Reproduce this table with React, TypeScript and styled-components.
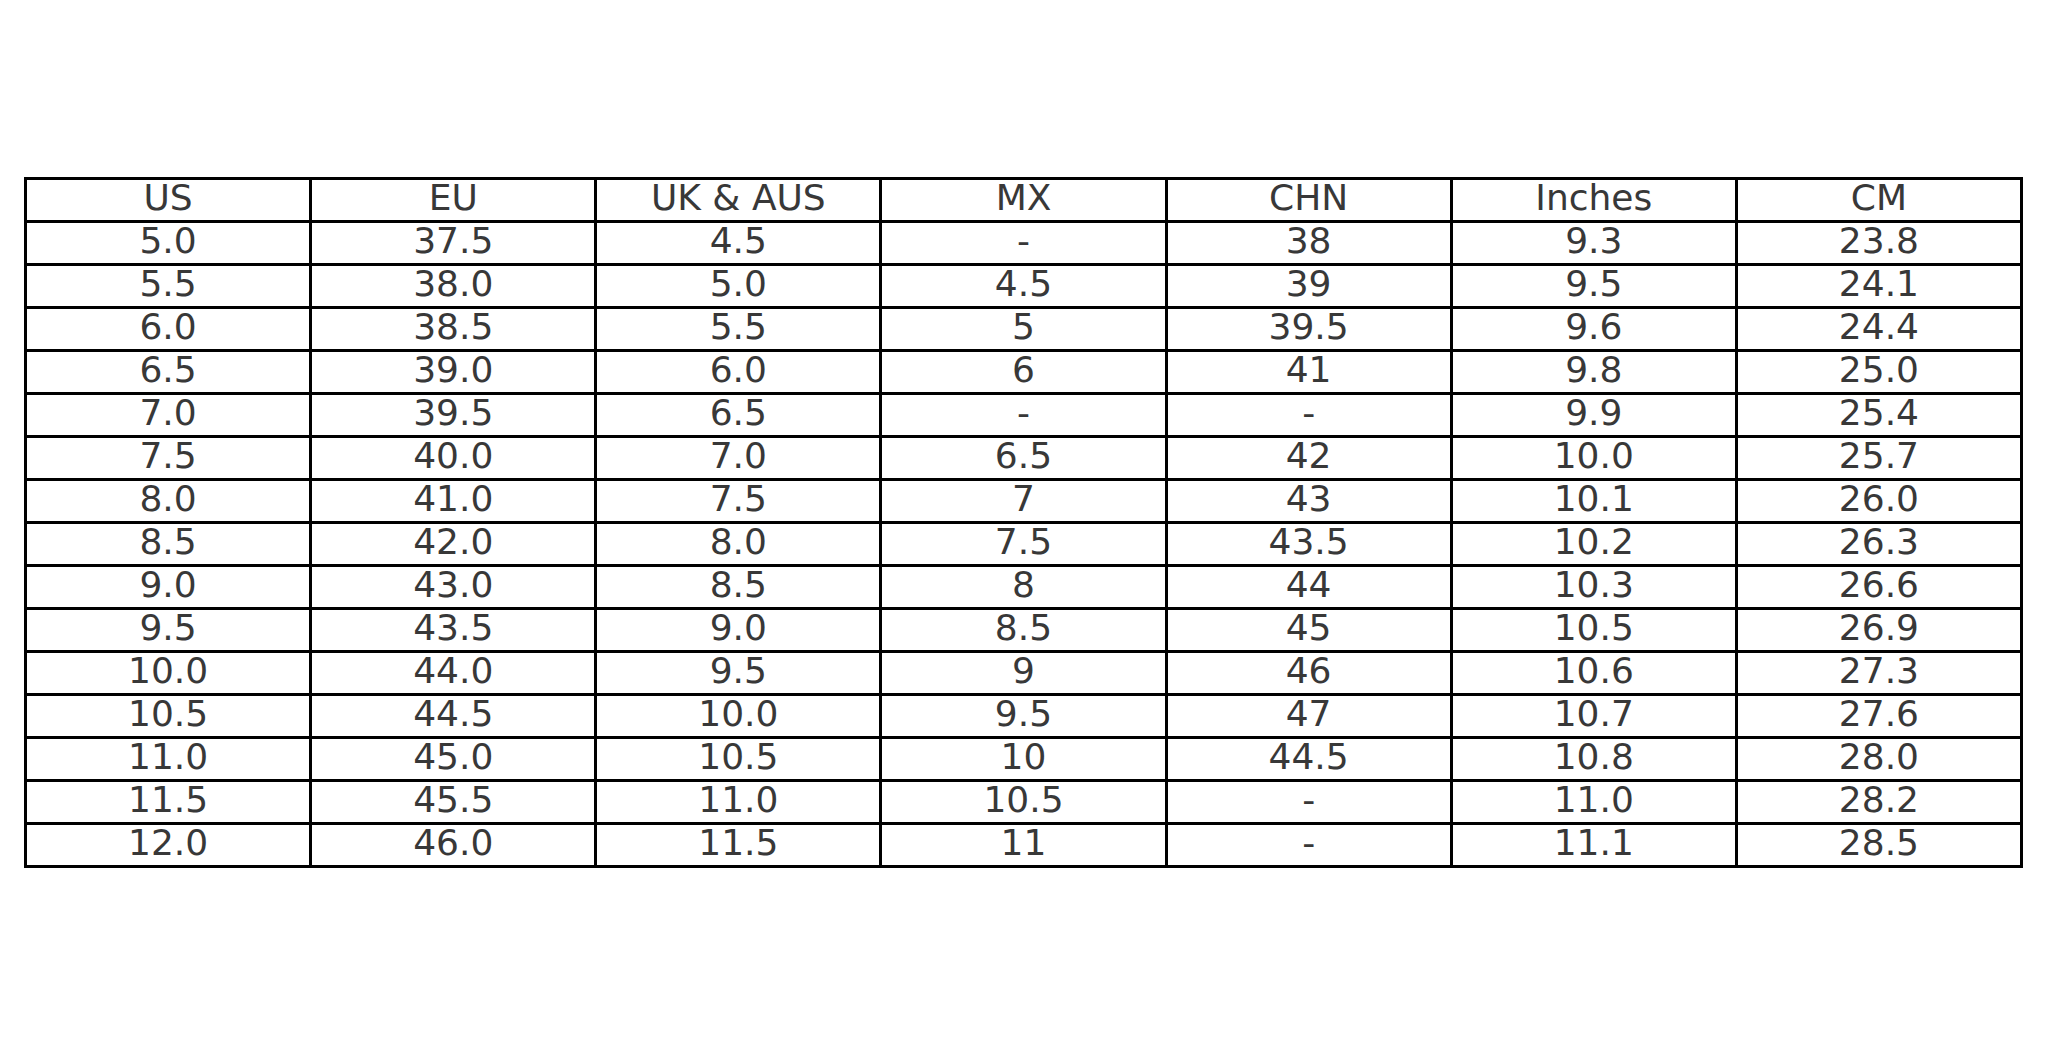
import React from "react";
import styled, { createGlobalStyle } from "styled-components";

const Global = createGlobalStyle`
  html, body { margin: 0; padding: 0; background: #ffffff; }
  body { font-family: "DejaVu Sans", "Liberation Sans", sans-serif; }
`;

const Page = styled.div`
  width: 2048px;
  height: 1043px;
  box-sizing: border-box;
  padding: 177px 0 0 24px;
  background: #ffffff;
`;

const Table = styled.table`
  border-collapse: collapse;
  table-layout: fixed;
  width: 1999px;
`;

const Cell = styled.td`
  border: 3px solid #000000;
  height: 35px;
  padding: 0 0 5px 0;
  text-align: center;
  vertical-align: middle;
  font-family: "DejaVu Sans", "Liberation Sans", sans-serif;
  font-size: 36px;
  line-height: 35px;
  color: #383838;
  white-space: nowrap;
  overflow: hidden;
`;

const headers = ["US", "EU", "UK & AUS", "MX", "CHN", "Inches", "CM"];

const rows: string[][] = [
  ["5.0", "37.5", "4.5", "-", "38", "9.3", "23.8"],
  ["5.5", "38.0", "5.0", "4.5", "39", "9.5", "24.1"],
  ["6.0", "38.5", "5.5", "5", "39.5", "9.6", "24.4"],
  ["6.5", "39.0", "6.0", "6", "41", "9.8", "25.0"],
  ["7.0", "39.5", "6.5", "-", "-", "9.9", "25.4"],
  ["7.5", "40.0", "7.0", "6.5", "42", "10.0", "25.7"],
  ["8.0", "41.0", "7.5", "7", "43", "10.1", "26.0"],
  ["8.5", "42.0", "8.0", "7.5", "43.5", "10.2", "26.3"],
  ["9.0", "43.0", "8.5", "8", "44", "10.3", "26.6"],
  ["9.5", "43.5", "9.0", "8.5", "45", "10.5", "26.9"],
  ["10.0", "44.0", "9.5", "9", "46", "10.6", "27.3"],
  ["10.5", "44.5", "10.0", "9.5", "47", "10.7", "27.6"],
  ["11.0", "45.0", "10.5", "10", "44.5", "10.8", "28.0"],
  ["11.5", "45.5", "11.0", "10.5", "-", "11.0", "28.2"],
  ["12.0", "46.0", "11.5", "11", "-", "11.1", "28.5"],
];

export default function App() {
  return (
    <>
      <Global />
      <Page>
        <Table>
          <tbody>
            <tr>
              {headers.map((h) => (
                <Cell key={h}>{h}</Cell>
              ))}
            </tr>
            {rows.map((r, i) => (
              <tr key={i}>
                {r.map((v, j) => (
                  <Cell key={j}>{v}</Cell>
                ))}
              </tr>
            ))}
          </tbody>
        </Table>
      </Page>
    </>
  );
}
